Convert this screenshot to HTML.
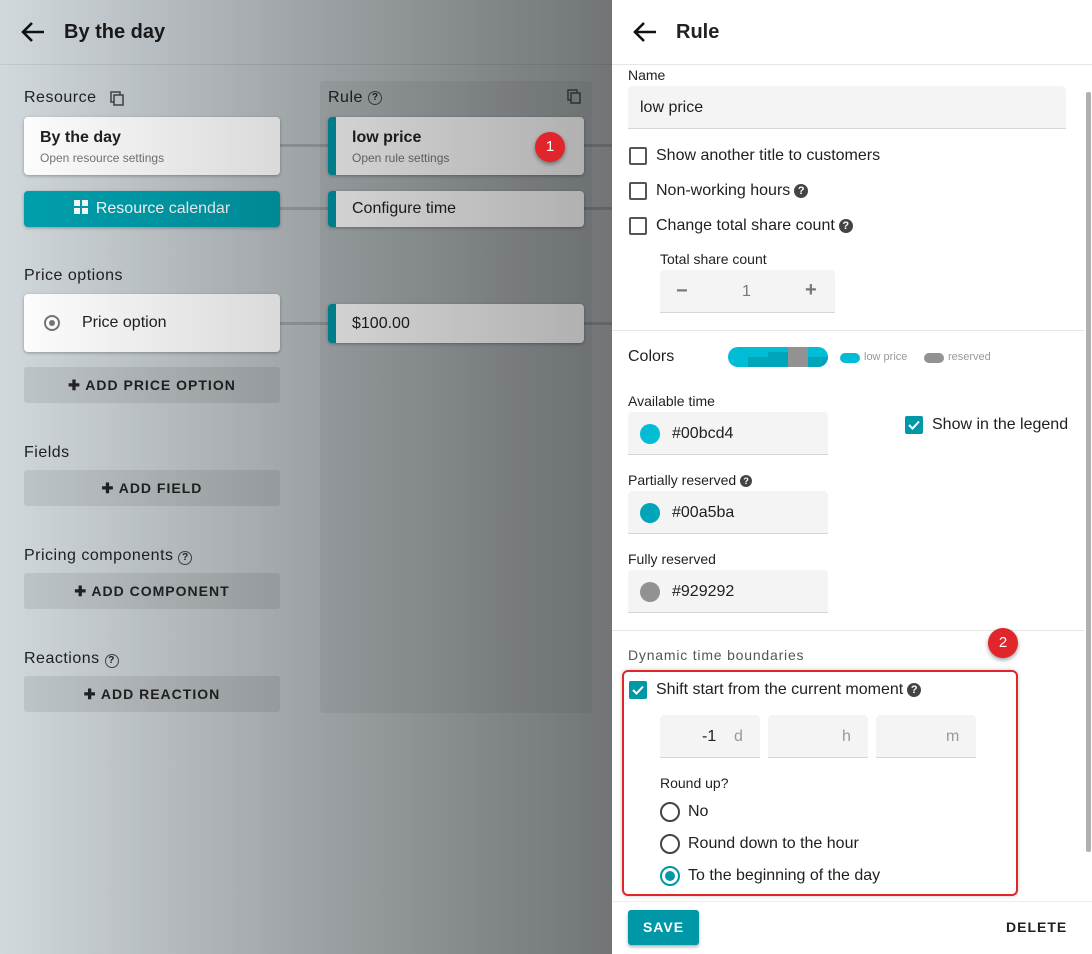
<!DOCTYPE html>
<html><head><meta charset="utf-8"><style>
*{box-sizing:border-box;margin:0;padding:0}
body{width:1092px;height:954px;overflow:hidden;font-family:"Liberation Sans",sans-serif;position:relative;color:#212121}
.a{position:absolute}
#left{left:0;top:0;width:612px;height:954px;background:linear-gradient(90deg,#d2d9dd,#a6acaf);overflow:hidden}
.card{position:absolute;background:#fff;border-radius:4px;box-shadow:0 1px 3px rgba(0,0,0,.3)}
.rcard{position:absolute;background:#fff;border-radius:4px;border-left:8px solid #0097a7;box-shadow:0 1px 3px rgba(0,0,0,.3)}
.btn{position:absolute;background:rgba(0,0,0,.08);border-radius:3px;font-size:14px;font-weight:bold;letter-spacing:1px;text-align:center;line-height:36px;color:#222}
.line{position:absolute;height:3px;background:rgba(0,0,0,.15)}
.h{font-size:16px;letter-spacing:.5px}
#ov{left:0;top:0;width:612px;height:954px;background:linear-gradient(90deg,rgba(0,0,0,0),rgba(0,0,0,.32))}
#right{left:612px;top:0;width:480px;height:954px;background:#fff}
.lbl{font-size:14px;color:#222}
.fld{position:absolute;background:#f4f4f4;border-bottom:1px solid #d5d5d5;border-radius:4px 4px 0 0}
.cb{position:absolute;width:18px;height:18px;border:2px solid #555;border-radius:2px}
.cbon{position:absolute;width:18px;height:18px;background:#0097a7;border-radius:2px}
.q{display:inline-block;width:14px;height:14px;border-radius:50%;background:#444;color:#fff;font-size:11px;font-weight:bold;text-align:center;line-height:14px;vertical-align:1px;margin-left:4px}
.t16{font-size:16px}
.dot{position:absolute;width:20px;height:20px;border-radius:50%}
.rad{position:absolute;width:20px;height:20px;border:2px solid #444;border-radius:50%}
</style></head><body>
<div id="left" class="a">
  <div class="a" style="left:0;top:64px;width:612px;height:1px;background:rgba(0,0,0,.08)"></div>
  <svg class="a" style="left:20px;top:20px" width="26" height="24" viewBox="0 0 26 24"><path d="M24 12H4M12 3L3 12l9 9" stroke="#111" stroke-width="2.6" fill="none"/></svg>
  <div class="a" style="left:64px;top:21px;font-size:20px;font-weight:bold;color:#1a1a1a">By the day</div>
  <div class="a" style="left:320px;top:81px;width:272px;height:632px;background:rgba(0,0,0,.05);border-radius:4px"></div>
  <div class="a h" style="left:24px;top:89px">Resource</div>
  <svg class="a" style="left:110px;top:91px" width="14" height="15"><rect x="1" y="1" width="9" height="10" fill="none" stroke="#444" stroke-width="1.5"/><rect x="4" y="4" width="9" height="10" fill="#c8cfd2" stroke="#444" stroke-width="1.5"/></svg>
  <div class="a h" style="left:328px;top:89px">Rule</div>
  <div class="a" style="left:368px;top:91px;width:14px;height:14px;border:1.5px solid #444;border-radius:50%;font-size:10px;text-align:center;line-height:11px;font-weight:bold">?</div>
  <svg class="a" style="left:567px;top:89px" width="14" height="15"><rect x="1" y="1" width="9" height="10" fill="none" stroke="#444" stroke-width="1.5"/><rect x="4" y="4" width="9" height="10" fill="#9ea3a5" stroke="#444" stroke-width="1.5"/></svg>
  <div class="line" style="left:280px;top:144px;width:48px"></div>
  <div class="line" style="left:584px;top:144px;width:28px"></div>
  <div class="line" style="left:280px;top:207px;width:48px"></div>
  <div class="line" style="left:584px;top:207px;width:28px"></div>
  <div class="line" style="left:280px;top:322px;width:48px"></div>
  <div class="line" style="left:584px;top:322px;width:28px"></div>
  <div class="card" style="left:24px;top:117px;width:256px;height:58px"><div class="a" style="left:16px;top:12px;font-size:16px;font-weight:bold">By the day</div><div class="a" style="left:16px;top:34px;font-size:12px;color:#777">Open resource settings</div></div>
  <div class="a" style="left:24px;top:191px;width:256px;height:36px;background:#00a0ae;border-radius:4px;box-shadow:0 1px 3px rgba(0,0,0,.3);color:#fff;font-size:16px;line-height:36px;text-align:center"><span style="display:inline-block;width:14px;height:14px;vertical-align:-1px;margin-right:8px;background:linear-gradient(90deg,#fff 6px,transparent 6px,transparent 8px,#fff 8px);-webkit-mask:linear-gradient(#000 6px,transparent 6px,transparent 8px,#000 8px)"></span>Resource calendar</div>
  <div class="rcard" style="left:328px;top:117px;width:256px;height:58px"><div class="a" style="left:16px;top:12px;font-size:16px;font-weight:bold">low price</div><div class="a" style="left:16px;top:34px;font-size:12px;color:#777">Open rule settings</div></div>
  <div class="rcard" style="left:328px;top:191px;width:256px;height:36px"><div class="a" style="left:16px;top:9px;font-size:16px">Configure time</div></div>
  <div class="a h" style="left:24px;top:267px">Price options</div>
  <div class="card" style="left:24px;top:294px;width:256px;height:58px"><div class="a" style="left:20px;top:21px;width:16px;height:16px;border:2px solid #777;border-radius:50%"><div class="a" style="left:3px;top:3px;width:6px;height:6px;background:#777;border-radius:50%"></div></div><div class="a" style="left:58px;top:20px;font-size:16px">Price option</div></div>
  <div class="rcard" style="left:328px;top:304px;width:256px;height:39px"><div class="a" style="left:16px;top:11px;font-size:16px">$100.00</div></div>
  <div class="btn" style="left:24px;top:367px;width:256px">✚ ADD PRICE OPTION</div>
  <div class="a h" style="left:24px;top:444px">Fields</div>
  <div class="btn" style="left:24px;top:470px;width:256px">✚ ADD FIELD</div>
  <div class="a h" style="left:24px;top:547px">Pricing components <span style="display:inline-block;width:14px;height:14px;border:1.5px solid #444;border-radius:50%;font-size:10px;text-align:center;line-height:11px;font-weight:bold">?</span></div>
  <div class="btn" style="left:24px;top:573px;width:256px">✚ ADD COMPONENT</div>
  <div class="a h" style="left:24px;top:650px">Reactions <span style="display:inline-block;width:14px;height:14px;border:1.5px solid #444;border-radius:50%;font-size:10px;text-align:center;line-height:11px;font-weight:bold">?</span></div>
  <div class="btn" style="left:24px;top:676px;width:256px">✚ ADD REACTION</div>
  <div id="ov" class="a"></div>
  <div class="a" style="left:535px;top:132px;width:30px;height:30px;border-radius:50%;background:#e0262b;box-shadow:0 2px 4px rgba(0,0,0,.4);color:#fff;text-align:center;line-height:30px;font-size:15px">1</div>
</div>
<div id="right" class="a">
  <svg class="a" style="left:20px;top:20px" width="26" height="24" viewBox="0 0 26 24"><path d="M24 12H4M12 3L3 12l9 9" stroke="#111" stroke-width="2.6" fill="none"/></svg>
  <div class="a" style="left:64px;top:21px;font-size:20px;font-weight:bold">Rule</div>
  <div class="a" style="left:0;top:64px;width:480px;height:1px;background:#e6e6e6"></div>
  <div class="a" style="left:474px;top:92px;width:5px;height:760px;background:#b0b0b0;border-radius:2px"></div>
  <div class="a lbl" style="left:16px;top:67px">Name</div>
  <div class="fld" style="left:16px;top:86px;width:438px;height:43px"><div class="a t16" style="left:12px;top:13px">low price</div></div>
  <div class="cb" style="left:17px;top:147px"></div><div class="a t16" style="left:44px;top:147px">Show another title to customers</div>
  <div class="cb" style="left:17px;top:182px"></div><div class="a t16" style="left:44px;top:182px">Non-working hours<span class="q">?</span></div>
  <div class="cb" style="left:17px;top:217px"></div><div class="a t16" style="left:44px;top:217px">Change total share count<span class="q">?</span></div>
  <div class="a lbl" style="left:48px;top:251px">Total share count</div>
  <div class="fld" style="left:48px;top:270px;width:175px;height:43px"><div class="a" style="left:16px;top:10px;font-size:20px;color:#777;font-weight:bold">−</div><div class="a t16" style="left:82px;top:13px;color:#777">1</div><div class="a" style="left:145px;top:9px;font-size:20px;color:#777;font-weight:bold">+</div></div>
  <div class="a" style="left:0;top:330px;width:472px;height:1px;background:#e6e6e6"></div>
  <div class="a t16" style="left:16px;top:348px">Colors</div>
  <div class="a" style="left:116px;top:347px;width:100px;height:20px;border-radius:10px;overflow:hidden;background:#00bcd4"><div class="a" style="left:20px;top:10px;width:20px;height:10px;background:#00a5ba"></div><div class="a" style="left:40px;top:5px;width:20px;height:15px;background:#00a5ba"></div><div class="a" style="left:60px;top:0;width:20px;height:20px;background:#929292"></div><div class="a" style="left:80px;top:10px;width:20px;height:10px;background:#00a5ba"></div></div>
  <div class="a" style="left:228px;top:353px;width:20px;height:10px;border-radius:5px;background:#00bcd4"></div><div class="a" style="left:252px;top:351px;font-size:11px;color:#999">low price</div>
  <div class="a" style="left:312px;top:353px;width:20px;height:10px;border-radius:5px;background:#929292"></div><div class="a" style="left:336px;top:351px;font-size:11px;color:#999">reserved</div>
  <div class="a lbl" style="left:16px;top:393px">Available time</div>
  <div class="fld" style="left:16px;top:412px;width:200px;height:43px"><div class="dot" style="left:12px;top:12px;background:#00bcd4"></div><div class="a t16" style="left:44px;top:13px">#00bcd4</div></div>
  <div class="cbon" style="left:293px;top:416px"></div><svg class="a" style="left:296px;top:420px" width="12" height="10"><path d="M1 5l3.5 3.5L11 1.5" stroke="#fff" stroke-width="2" fill="none"/></svg>
  <div class="a t16" style="left:320px;top:416px">Show in the legend</div>
  <div class="a lbl" style="left:16px;top:472px">Partially reserved<span class="q" style="width:12px;height:12px;line-height:12px;font-size:9px">?</span></div>
  <div class="fld" style="left:16px;top:491px;width:200px;height:43px"><div class="dot" style="left:12px;top:12px;background:#00a5ba"></div><div class="a t16" style="left:44px;top:13px">#00a5ba</div></div>
  <div class="a lbl" style="left:16px;top:551px">Fully reserved</div>
  <div class="fld" style="left:16px;top:570px;width:200px;height:43px"><div class="dot" style="left:12px;top:12px;background:#929292"></div><div class="a t16" style="left:44px;top:13px">#929292</div></div>
  <div class="a" style="left:0;top:630px;width:472px;height:1px;background:#e6e6e6"></div>
  <div class="a" style="left:16px;top:647px;font-size:14px;color:#555;letter-spacing:.8px">Dynamic time boundaries</div>
  <div class="a" style="left:10px;top:670px;width:396px;height:226px;border:2px solid #e0262b;border-radius:6px;box-shadow:0 0 4px rgba(0,0,0,.2)"></div>
  <div class="a" style="left:376px;top:628px;width:30px;height:30px;border-radius:50%;background:#e0262b;box-shadow:0 2px 4px rgba(0,0,0,.4);color:#fff;text-align:center;line-height:30px;font-size:15px">2</div>
  <div class="cbon" style="left:17px;top:681px"></div><svg class="a" style="left:20px;top:685px" width="12" height="10"><path d="M1 5l3.5 3.5L11 1.5" stroke="#fff" stroke-width="2" fill="none"/></svg>
  <div class="a t16" style="left:44px;top:681px">Shift start from the current moment<span class="q">?</span></div>
  <div class="fld" style="left:48px;top:715px;width:100px;height:43px"><div class="a t16" style="left:42px;top:13px">-1</div><div class="a t16" style="left:74px;top:13px;color:#999">d</div></div>
  <div class="fld" style="left:156px;top:715px;width:100px;height:43px"><div class="a t16" style="left:74px;top:13px;color:#999">h</div></div>
  <div class="fld" style="left:264px;top:715px;width:100px;height:43px"><div class="a t16" style="left:70px;top:13px;color:#999">m</div></div>
  <div class="a lbl" style="left:48px;top:775px">Round up?</div>
  <div class="rad" style="left:48px;top:802px"></div><div class="a t16" style="left:76px;top:803px">No</div>
  <div class="rad" style="left:48px;top:834px"></div><div class="a t16" style="left:76px;top:835px">Round down to the hour</div>
  <div class="rad" style="left:48px;top:866px;border-color:#0097a7"><div class="a" style="left:3px;top:3px;width:10px;height:10px;border-radius:50%;background:#0097a7"></div></div><div class="a t16" style="left:76px;top:867px">To the beginning of the day</div>
  <div class="a" style="left:0;top:901px;width:480px;height:1px;background:#ececec"></div>
  <div class="a" style="left:16px;top:910px;width:71px;height:35px;background:#0097a7;border-radius:3px;box-shadow:0 2px 3px rgba(0,0,0,.3);color:#fff;font-size:14px;font-weight:bold;letter-spacing:1px;text-align:center;line-height:35px">SAVE</div>
  <div class="a" style="left:394px;top:919px;font-size:14px;font-weight:bold;letter-spacing:1px">DELETE</div>
</div>
</body></html>
